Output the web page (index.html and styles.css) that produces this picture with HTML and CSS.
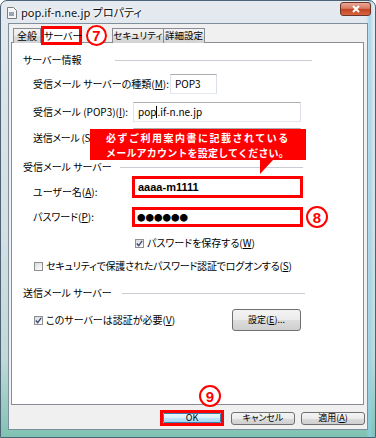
FILE: index.html
```html
<!DOCTYPE html>
<html lang="ja">
<head>
<meta charset="utf-8">
<title>pop.if-n.ne.jp プロパティ</title>
<link rel="stylesheet" href="styles.css">
</head>
<body>
<div class="window">
  <div class="titlebar">
    <svg class="app-icon" width="10" height="12" viewBox="0 0 10 12">
      <path d="M0.5 0.5h6l3 3v8h-9z" fill="#f6f6f6" stroke="#7d7d7d"/>
      <rect x="2" y="5" width="5" height="4" fill="#9aa6b4"/>
    </svg>
    <span class="title">pop.if-n.ne.jp プロパティ</span>
    <span class="close"><svg width="10" height="8" viewBox="0 0 10 8"><path d="M2 1l6 6M8 1l-6 6" stroke="#fff" stroke-width="2"/></svg></span>
  </div>
  <div class="client">
    <div class="tabs">
      <div class="tab tab-general">全般</div>
      <div class="tab tab-active">サーバー</div>
      <div class="step step-tab">7</div>
      <div class="tab tab-sec">セキュリティ</div>
      <div class="tab tab-adv">詳細設定</div>
    </div>
    <div class="pane">
      <div class="group g1"><span class="group-label">サーバー情報</span><span class="group-line"></span></div>
      <div class="row row-m"><span class="label lw-m">受信メール サーバーの種類(<u>M</u>):</span><span class="input in-pop3">POP3</span></div>
      <div class="row row-i"><span class="label lw">受信メール (POP3)(<u>I</u>):</span><span class="input in-wide">pop<span class="caret"></span>.if-n.ne.jp</span></div>
      <div class="row row-s"><span class="label lw lw-s">送信メール (S</span><span class="input in-wide"></span></div>
      <div class="group g2"><span class="group-label">受信メール サーバー</span><span class="group-line"></span></div>
      <div class="row row-user"><span class="label lw-u">ユーザー名(<u>A</u>):</span><span class="redbox box-user">aaaa-m1111</span></div>
      <div class="row row-pass"><span class="label lw-u">パスワード(<u>P</u>):</span><span class="redbox box-pass">●●●●●●</span><span class="step step-pass">8</span></div>
      <div class="row row-save"><span class="cb"><svg width="7" height="7" viewBox="0 0 7 7"><path d="M0.8 3.6L2.7 5.6L6.2 0.9" fill="none" stroke="#3b4d78" stroke-width="1.4"/></svg></span><span>パスワードを保存する(<u>W</u>)</span></div>
      <div class="row row-secure"><span class="cb"></span><span class="secure-text">セキュリティで保護されたパスワード認証でログオンする(<u>S</u>)</span></div>
      <div class="group g3"><span class="group-label">送信メール サーバー</span><span class="group-line"></span></div>
      <div class="row row-auth"><span class="cb"><svg width="7" height="7" viewBox="0 0 7 7"><path d="M0.8 3.6L2.7 5.6L6.2 0.9" fill="none" stroke="#3b4d78" stroke-width="1.4"/></svg></span><span>このサーバーは認証が必要(<u>V</u>)</span><span class="btn btn-settings">設定(<u>E</u>)...</span></div>
    </div>
    <div class="buttons">
      <span class="okwrap"><span class="btn btn-ok">OK</span></span>
      <span class="btn btn-cancel">キャンセル</span>
      <span class="btn btn-apply">適用(<u>A</u>)</span>
    </div>
  </div>
</div>
<div class="callout"><div class="cl1">必ずご利用案内書に記載されている</div><div class="cl2">メールアカウントを設定してください。</div></div>
<div class="step step-ok">9</div>
</body>
</html>
```
FILE: styles.css
```css
* { box-sizing: border-box; }
html, body { margin: 0; padding: 0; }
body {
  position: relative;
  width: 376px;
  height: 438px;
  overflow: hidden;
  font-family: "Noto Sans CJK JP", "Noto Sans", sans-serif;
  font-size: 10px;
  line-height: 14px;
  color: #000;
  font-feature-settings: "palt";
  background: #fff;
}
u { text-decoration: underline; text-underline-offset: 1px; }

.window {
  width: 376px;
  height: 438px;
  display: flex;
  flex-direction: column;
  padding: 0 7px 7px 7px;
  border: 1px solid #4d6275;
  border-radius: 7px 7px 0 0;
  background:
    linear-gradient(90deg, rgba(140,210,240,0) 97.6%, rgba(140,210,240,.7) 98.6%, rgba(140,210,240,0) 99.6%),
    linear-gradient(180deg, #e4eaf0 0%, #dae3ea 25%, #d3dee5 55%, #c0d9d9 82%, #7fc3b2 100%);
}
.titlebar {
  height: 22px;
  display: flex;
  align-items: center;
}
.app-icon { margin-left: -1px; margin-top: 1px; flex: none; }
.title {
  margin-left: 4px;
  font-size: 11px;
  color: #111;
  text-shadow: 0 0 5px #fff, 0 0 3px #fff;
}
.close {
  margin-left: auto;
  margin-right: -3px;
  align-self: flex-start;
  margin-top: 1px;
  width: 31px;
  height: 14px;
  border: 1px solid #6f3326;
  border-radius: 3px;
  background: linear-gradient(180deg, #e9a898 0%, #d77a63 45%, #c24424 52%, #d8643f 100%);
  display: flex;
  align-items: center;
  justify-content: center;
}

.client {
  flex: 1;
  display: flex;
  flex-direction: column;
  background: #f0f0f0;
  border: 1px solid #7e8e9c;
  padding: 2px 2px 0 2px;
}
.tabs {
  height: 17px;
  display: flex;
  align-items: flex-start;
  margin-left: 2px;
  position: relative;
  z-index: 2;
}
.tab {
  height: 15px;
  margin-top: 2px;
  border: 1px solid #898c95;
  border-bottom: none;
  background: linear-gradient(180deg, #f3f3f3 0%, #ebebeb 50%, #dedede 50%, #d2d2d2 100%);
  font-size: 10px;
  line-height: 13px;
  text-align: center;
  white-space: nowrap;
}
.tab-general { width: 28px; }
.tab-active {
  width: 41px;
  height: 19px;
  margin-top: 0;
  border: 3px solid #f00;
  background: #fff;
  line-height: 13px;
}
.tab-sec { width: 52px; font-size: 9.5px; }
.tab-adv { width: 42px; margin-left: -1px; font-size: 9.5px; }

.step {
  width: 21px;
  height: 21px;
  border: 2.5px solid #f00;
  border-radius: 50%;
  background: #fff;
  color: #f00;
  font-family: "Liberation Sans", Arial, sans-serif;
  font-weight: 700;
  font-size: 15px;
  line-height: 1;
  display: flex;
  align-items: center;
  justify-content: center;
  flex: none;
}
.step-tab { margin: -1px 5px 0 4px; }
.step-pass { width: 22px; height: 22px; margin-left: 3px; }
.step-ok { position: absolute; left: 199px; top: 385px; width: 22px; height: 22px; z-index: 5; }

.pane {
  height: 363px;
  margin-top: -1px;
  margin-right: 1px;
  background: #fff;
  border: 1px solid #898c95;
  display: flex;
  flex-direction: column;
  position: relative;
  z-index: 1;
}
.group {
  height: 14px;
  display: flex;
  align-items: center;
  padding-left: 11px;
}
.group-line {
  margin-left: auto;
  height: 0;
  border-top: 1px solid #c7cdd2;
}
.g1 { margin-top: 10px; }
.g1 .group-line { width: 197px; margin-right: 51px; }
.g2 { margin-top: 12px; }
.g2 .group-line { width: 183px; margin-right: 60px; }
.g3 { margin-top: 13px; }
.g3 .group-line { width: 183px; margin-right: 58px; }

.row {
  display: flex;
  align-items: center;
  padding-left: 21px;
  white-space: nowrap;
}
.label { flex: none; }
.lw-m { width: 137px; }
.lw { width: 100px; }
.lw-s { letter-spacing: -0.3px; }
.lw-u { width: 99px; }
.input {
  height: 20px;
  border: 1px solid;
  border-color: #abadb3 #dbdfe6 #e3e9ef #e2e3ea;
  background: #fff;
  padding-left: 4px;
  line-height: 18px;
  font-feature-settings: normal;
}
.in-pop3 { width: 47px; }
.in-wide { width: 168px; }
.caret {
  display: inline-block;
  width: 1px;
  height: 12px;
  background: #000;
  vertical-align: -2px;
}
.row-m { margin-top: 7px; height: 20px; }
.row-i { margin-top: 8px; height: 20px; }
.row-s { margin-top: 6px; height: 20px; }
.row-user { margin-top: 2px; height: 22px; align-items: flex-start; }
.row-user .label { margin-top: 9px; }
.row-pass { margin-top: 9px; height: 20px; }
.redbox {
  width: 171px;
  border: 3px solid #f00;
  background: #fff;
  padding-left: 3px;
  font-family: "Liberation Sans", Arial, sans-serif;
  font-weight: 700;
  font-feature-settings: normal;
}
.box-user { height: 22px; font-size: 11px; line-height: 16px; }
.box-pass {
  height: 20px;
  font-family: "Noto Sans CJK JP", sans-serif;
  font-size: 8.5px;
  line-height: 14px;
  letter-spacing: 0;
  padding-left: 2px;
}
.row-save { margin-top: 9px; height: 14px; padding-left: 123px; }
.row-secure { margin-top: 9px; height: 14px; padding-left: 22px; }
.secure-text { letter-spacing: -0.2px; }
.row-auth { margin-top: 9px; height: 22px; padding-left: 22px; }
.cb {
  flex: none;
  width: 9px;
  height: 9px;
  margin-right: 3px;
  border: 1px solid #8e8f8f;
  background: linear-gradient(135deg, #dadada 0%, #f4f4f4 70%, #fff 100%);
  display: flex;
  align-items: center;
  justify-content: center;
}

.btn {
  display: flex;
  align-items: center;
  justify-content: center;
  border: 1px solid #707070;
  border-radius: 3px;
  background: linear-gradient(180deg, #f4f4f4 0%, #ebebeb 50%, #dddddd 50%, #cfcfcf 100%);
  font-size: 9px;
  line-height: 10px;
  white-space: nowrap;
}
.btn-settings { width: 69px; height: 22px; margin-left: auto; margin-right: 62px; }
.buttons {
  height: 16px;
  margin-top: 5px;
  display: flex;
  align-items: center;
  justify-content: flex-end;
}
.okwrap {
  width: 64px;
  height: 16px;
  border: 3px solid #f00;
  display: flex;
}
.btn-ok {
  flex: 1;
  border-color: #3c7fb1;
  border-radius: 1px;
  background: linear-gradient(180deg, #eaf6fd 0%, #d9f0fc 50%, #bee6fd 50%, #a7d9f5 100%);
}
.btn-cancel { width: 64px; height: 13px; margin-left: 7px; }
.btn-apply { width: 64px; height: 13px; margin-left: 6px; }

.callout {
  position: absolute;
  left: 90px;
  top: 129px;
  width: 216px;
  height: 31px;
  background: #f00;
  color: #fff;
  font-weight: 700;
  font-size: 10px;
  line-height: 15px;
  padding: 0.5px 0 0 16px;
  font-feature-settings: normal;
  white-space: nowrap;
  z-index: 5;
}
.cl1 { letter-spacing: 1.5px; }
.cl2 { letter-spacing: 0.2px; }
.callout::after {
  content: "";
  position: absolute;
  left: 170px;
  top: 31px;
  width: 0;
  height: 0;
  border-top: 14px solid #f00;
  border-right: 13px solid transparent;
}
```
